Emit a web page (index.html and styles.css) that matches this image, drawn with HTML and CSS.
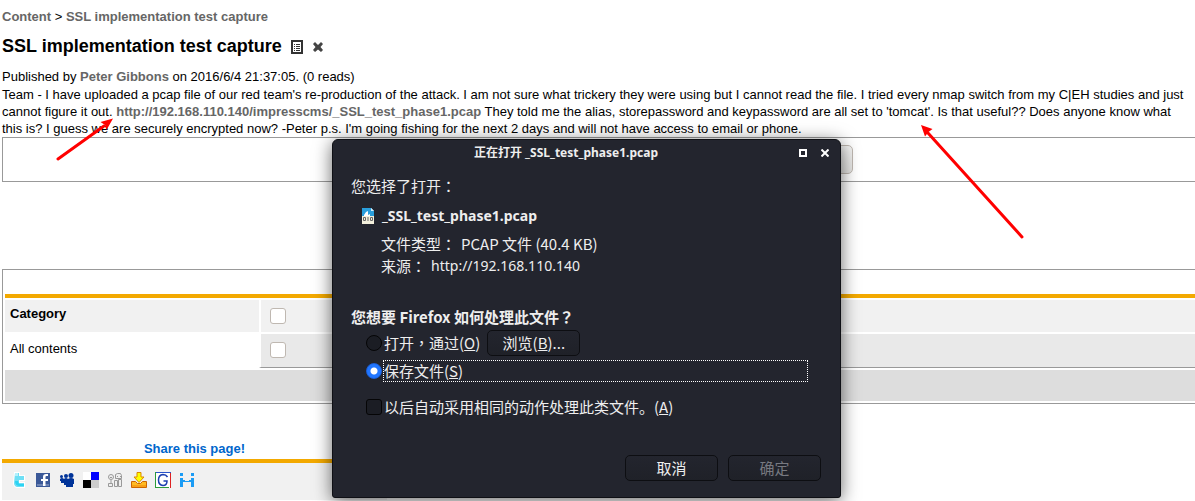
FILE: index.html
```html
<!DOCTYPE html>
<html lang="en">
<head>
<meta charset="utf-8">
<title>SSL implementation test capture</title>
<link rel="stylesheet" href="styles.css">
</head>
<body>
<main class="page">
  <nav class="breadcrumb"><a href="#">Content</a> &gt; <a href="#">SSL implementation test capture</a></nav>
  <header class="heading">
    <h1>SSL implementation test capture</h1>
    <a href="#" class="tool" aria-label="Edit"><svg width="12" height="14" viewBox="0 0 12 14"><rect x="1" y="1" width="10" height="12" fill="#fff" stroke="#333" stroke-width="2"/><path d="M3 4.500h1M5 4.500h4M3 6.500h1M5 6.500h4M3 8.500h1M5 8.500h4M3 10.500h1M5 10.500h4" stroke="#333"/></svg></a>
    <a href="#" class="tool" aria-label="Delete"><svg width="12" height="12" viewBox="0 0 12 12"><path d="M3 1L6 4L9 1L11 3L8.500 6L11 9L9 11L6 8.500L3 11L1 9L3.500 6L1 3Z" fill="#444"/></svg></a>
  </header>
  <p class="text">Published by <a href="#">Peter Gibbons</a> on 2016/6/4 21:37:05. (0 reads)</p>
  <p class="text">Team - I have uploaded a pcap file of our red team's re-production of the attack. I am not sure what trickery they were using but I cannot read the file. I tried every nmap switch from my C|EH studies and just cannot figure it out. <a href="#">http://192.168.110.140/impresscms/_SSL_test_phase1.pcap</a> They told me the alias, storepassword and keypassword are all set to 'tomcat'. Is that useful?? Does anyone know what this is? I guess we are securely encrypted now? -Peter p.s. I'm going fishing for the next 2 days and will not have access to email or phone.</p>
  <form class="comment-bar"><button type="button" class="post"></button></form>
  <section class="rights">
    <table>
      <tbody>
        <tr class="row-head"><th scope="row"><label for="cat">Category</label></th><td><input type="checkbox" id="cat"></td></tr>
        <tr class="row-all"><th scope="row"><label for="all">All contents</label></th><td><input type="checkbox" id="all"></td></tr>
        <tr class="row-foot"><td colspan="2"></td></tr>
      </tbody>
    </table>
  </section>
  <aside class="share">
    <h2>Share this page!</h2>
    <div class="icons">
      <a href="#" aria-label="Twitter"><svg width="16" height="16" viewBox="0 0 16 16"><path d="M4 1h4v3h5v4H8v3h5v4H6q-3-1-3-4Z" fill="#6edff5" stroke="#fff" stroke-width="2" paint-order="stroke"/><path d="M4 1h3v3H4z" fill="#b3f0fb"/><path d="M4 9q0 5 5 5h4v-2H8L7 9Z" fill="#2bd3f3"/></svg></a>
      <a href="#" aria-label="Facebook"><svg width="16" height="16" viewBox="0 0 16 16"><path d="M1 1h14v14H1z" fill="#3b5998"/><path d="M2 12h12v2H2z" fill="#6d84b4"/><path d="M8 14V9H6V7h2V5q0-3 3-3h2v2h-1.500q-1 0-1 1v2H13v2h-2.500v5Z" fill="#fff"/></svg></a>
      <a href="#" aria-label="MySpace"><svg width="16" height="16" viewBox="0 0 16 16" fill="#003399"><circle cx="2.500" cy="4.500" r="1.500"/><circle cx="7" cy="4" r="2"/><circle cx="12" cy="3.500" r="2.500"/><path d="M1 7q2-2 4 0q2-2 4 0q3-2 6 0v5h-1v3H7v-2H5v-2H2V9H1z"/></svg></a>
      <a href="#" aria-label="Delicious"><svg width="16" height="16" viewBox="0 0 16 16"><path d="M0 0h8v8H0z" fill="#fff"/><path d="M8 0h8v8H8z" fill="#00f"/><path d="M0 8h8v8H0z" fill="#000"/><path d="M8 8h8v8H8z" fill="#ccc"/></svg></a>
      <a href="#" aria-label="Digg"><svg width="16" height="16" viewBox="0 0 16 16" fill="#eee" stroke="#999"><circle cx="4" cy="5" r="2.500"/><path d="M4 8v4M1.500 11.500h4v3h-4zM8.500 2.500l2-1h3l1 2v3h-6zM7.500 8.500h3v6h-3zM11.500 7.500h3v7h-3zM10 4.500h1M13 4.500h1M3 5.500h2"/></svg></a>
      <a href="#" aria-label="Bookmark"><svg width="16" height="16" viewBox="0 0 16 16"><path d="M.5 9.500h4l2 2h3l2-2h4v6H.5Z" fill="#fb2" stroke="#c60"/><path d="M1 13h14v2H1z" fill="#f8a015"/><path d="M6 .5h4V5h3L8 10.500L3 5h3Z" fill="#ff0" stroke="#d80"/></svg></a>
      <a href="#" aria-label="Google"><svg width="16" height="16" viewBox="0 0 16 16"><path d="M0 0h16v16H0z" fill="#fff"/><path d="M0 .5h16" stroke="#2a54c8"/><path d="M.5 0v16M0 15.500h14" stroke="#2b9b3a"/><path d="M15.500 1v15" stroke="#d22"/><path d="M12.500 5Q11 2.500 8 2.500Q3.500 3 3.500 8T8 13.500Q12 13.500 12 9H8.500" fill="none" stroke="#1b3fb0" stroke-width="1.500"/></svg></a>
      <a href="#" aria-label="Hi"><svg width="16" height="16" viewBox="0 0 16 16" fill="#1b9cf5"><path d="M1 1h3v3H1zM1 6h3v9H1zM12 1h3v3h-3zM12 6h3v9h-3zM4 8h2v2H4zM6 9h4v1H6zM10 8h2v2h-2z"/></svg></a>
    </div>
  </aside>
</main>

<section class="dialog" role="dialog" aria-labelledby="dlg-title" lang="zh-CN">
  <header class="titlebar">
    <h2 id="dlg-title">正在打开 _SSL_test_phase1.pcap</h2>
    <button type="button" aria-label="最大化"><svg width="8" height="8" viewBox="0 0 8 8"><path d="M1 1h6v6H1z" fill="none" stroke="#fff" stroke-width="2"/></svg></button>
    <button type="button" aria-label="关闭"><svg width="8" height="8" viewBox="0 0 8 8"><path d="M.5.500l7 7M7.500.500l-7 7" stroke="#fff" stroke-width="2"/></svg></button>
  </header>
  <div class="content">
    <p>您选择了打开<span class="mid" lang="zh-TW">：</span></p>
    <div class="file">
      <svg width="12" height="16" viewBox="0 0 12 16"><path d="M0 0h9l3 3v13H0z" fill="#f3f0dc"/><path d="M0 0h9l3 3v5H0z" fill="#2a9fdc"/><path d="M2 7l2-3 2-1v4l2-1v2H2z" fill="#fff"/><path d="M9 0v3h3z" fill="#d5eefa"/><path d="M1.500 9.500h2v3h-2zM8.500 9.500h2v3h-2zM6 9v4" fill="none" stroke="#666"/></svg>
      <strong class="latin">_SSL_test_phase1.pcap</strong>
    </div>
    <dl>
      <div><dt>文件类型<span class="mid" lang="zh-TW">：</span></dt><dd>PCAP 文件 (40.4 KB)</dd></div>
      <div><dt>来源<span class="mid" lang="zh-TW">：</span></dt><dd class="latin">http://192.168.110.140</dd></div>
    </dl>
    <h3>您想要 Firefox 如何处理此文件<span class="mid" lang="zh-TW">？</span></h3>
    <div class="option open"><input type="radio" name="act" id="open"><label for="open">打开<span class="mid" lang="zh-TW">，</span>通过(<u>O</u>)</label><button type="button" class="btn">浏览(<u>B</u>)...</button></div>
    <div class="option save"><input type="radio" name="act" id="save" checked><label for="save">保存文件(<u>S</u>)</label></div>
    <div class="option auto"><input type="checkbox" id="auto"><label for="auto">以后自动采用相同的动作处理此类文件。(<u>A</u>)</label></div>
    <footer><button type="button" class="btn">取消</button><button type="button" class="btn" disabled>确定</button></footer>
  </div>
</section>

<svg class="arrows" width="1195" height="260" viewBox="0 0 1195 260" aria-hidden="true"><path d="M58 159L104 126M1022 237L928 133" stroke="#f00" stroke-width="3" stroke-linecap="round"/><path d="M113 118.500L106.500 130L105 125L100.500 122Z M921 125L932.500 129L928.500 132L925 136.500Z" fill="#f00"/></svg>
</body>
</html>
```
FILE: styles.css
```css
* { box-sizing: border-box; }
html { height: 100%; overflow: hidden; }
body {
  position: relative;
  margin: 0;
  min-height: 100%;
  background: #fff;
  color: #000;
  font: 13px/17px "Liberation Sans", Arial, sans-serif;
  overflow: hidden;
}
h1, h2, h3, p, dl, dd { margin: 0; }
a { color: #666; font-weight: bold; text-decoration: none; }
svg { display: block; }

.page { margin: 8px -10px 0 2px; }
.heading { display: flex; align-items: center; gap: 9px; margin: 10px 0 11px; }
.heading h1 { font-size: 18px; line-height: 22px; }
.heading .tool { padding-top: 2px; }
.text { padding-right: 16px; }
.text + .text { margin-top: 1px; }

.comment-bar {
  display: flex;
  justify-content: center;
  height: 45px;
  padding-top: 7px;
  border: 1px solid #999;
}
.post {
  width: 498px;
  height: 29px;
  border: 1px solid #bfb8b1;
  border-radius: 5px;
  background: linear-gradient(#f4f4f3, #e4e3e1);
}

.rights { margin-top: 87px; padding: 24px 2px 1px; border: 1px solid #999; }
.rights table {
  width: 100%;
  border-collapse: separate;
  border-spacing: 0;
  border-top: 4px solid #f3a900;
}
.rights th, .rights td { padding: 5px; text-align: left; vertical-align: top; }
.rights tr { height: 34px; }
.rights .row-all { height: 36px; }
.rights th { width: 254px; }
.rights td { border-left: 2px solid #fff; padding: 8px 9px; }
.row-head th, .row-head td { border-top: 2px solid #fff; background: #f1f1f1; }
.rights .row-all th { padding-top: 6px; font-weight: normal; border-top: 2px solid #fff; }
.rights .row-all td { border-top: 2px solid #fff; border-bottom: 1px solid #999; background: #e9e9e9; }
.rights .row-foot td { border: 0; border-top: 2px solid #fff; border-bottom: 1px solid #fff; background: #ddd; }
.rights input {
  appearance: none;
  display: block;
  width: 16px;
  height: 16px;
  margin: 0;
  border: 1px solid #bfb8b1;
  border-radius: 3px;
  background: #fff;
}

.share { width: 32%; margin-top: 36px; }
.share h2 { padding-bottom: 2px; border-bottom: 4px solid #f3a900; color: #06c; font-size: 13px; line-height: 17px; text-align: center; }
.icons { display: flex; gap: 8px; padding: 9px 9px 12px; background: #f1f1f1; }

.dialog {
  position: absolute;
  left: 332px;
  top: 139px;
  width: 509px;
  border: 1px solid #0f1015;
  border-radius: 6px 6px 3px 3px;
  background: #23252e;
  box-shadow: 0 3px 18px rgba(0, 0, 0, .6);
  color: #eee;
  font: 15px/22px "Noto Sans CJK SC", sans-serif;
}
.mid { font-family: "Noto Sans CJK TC", sans-serif; }
.latin { font-family: "Noto Sans", sans-serif; font-size: 14px; }
.titlebar { display: flex; align-items: center; height: 26px; padding: 0 11px 0 14px; gap: 14px; }
.titlebar h2 { flex: 1; font: bold 12px/18px "Noto Sans", "Noto Sans CJK SC", sans-serif; text-align: center; }
.titlebar button { padding: 0; border: 0; background: none; }
.content { padding: 9px 18px 16px; }
.file { display: flex; align-items: center; gap: 8px; margin: 8px 0 6px 11px; }
.content dl { margin-left: 30px; }
.content dl div { display: flex; gap: 5px; }
.content h3 { margin-top: 29px; font-size: 15px; line-height: 22px; }
.option { display: flex; align-items: center; gap: 2px; margin-left: 15px; }
.option input {
  appearance: none;
  flex: none;
  width: 16px;
  height: 16px;
  margin: 0;
  border: 1px solid #050506;
  border-radius: 3px;
  background: #1b1d24;
}
.option input[type="radio"] { border-radius: 50%; }
.option input:checked { border-color: #1a5fd8; background: radial-gradient(circle, #fff 3px, #2176ff 4px); }
.open { height: 28px; margin-top: 1px; }
.open .btn { margin-left: 5px; }
.option.save { height: 28px; gap: 1px; }
.save label { flex: 1; margin-right: 14px; border: 1px dotted #fff; line-height: 20px; }
.auto { margin-top: 11px; }
.btn {
  width: 93px;
  height: 26px;
  padding: 0;
  border: 1px solid #0d0e12;
  border-radius: 5px;
  background: linear-gradient(#23252e, #1f2128);
  color: #eee;
  font: inherit;
  line-height: 22px;
}
.btn:disabled { color: #777980; }
.content footer { display: flex; justify-content: flex-end; gap: 10px; margin-top: 37px; padding-right: 1px; }

.arrows { position: absolute; left: 0; top: 0; }
```
